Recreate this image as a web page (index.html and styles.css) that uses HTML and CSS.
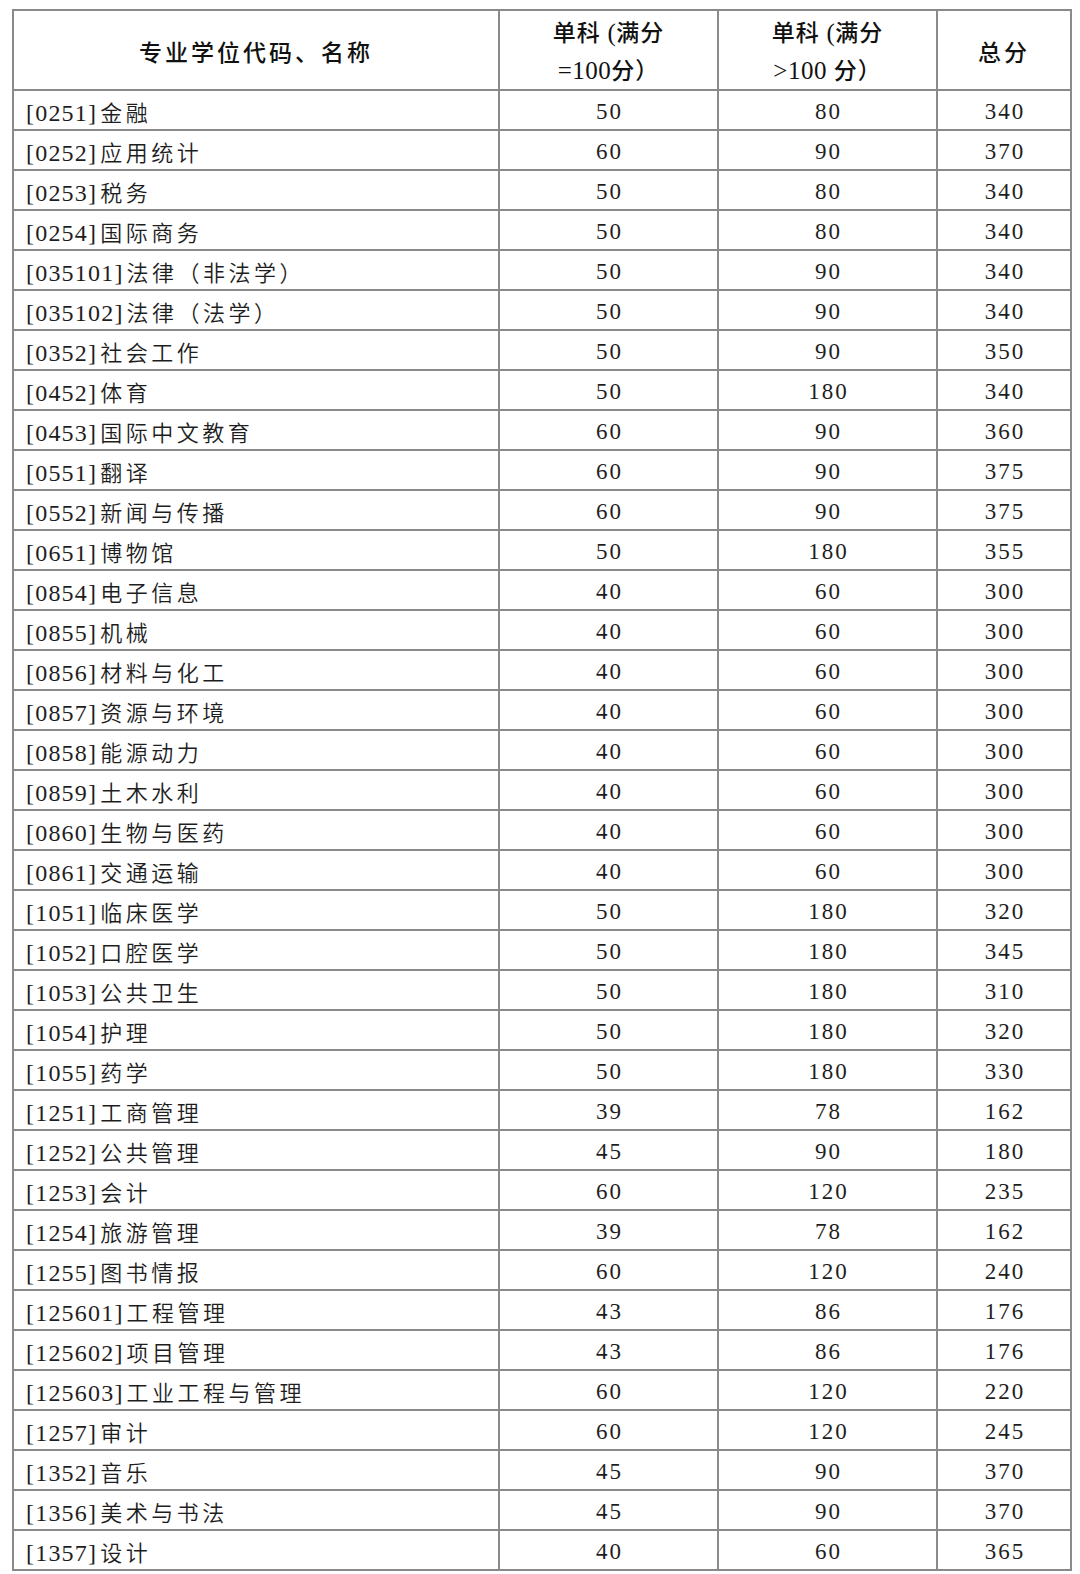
FILE: index.html
```html
<!DOCTYPE html>
<html lang="zh-CN">
<head>
<meta charset="utf-8">
<title>专业学位复试分数线</title>
<link rel="stylesheet" href="styles.css">
</head>
<body>
<table class="score-table">
  <colgroup>
    <col class="c-name">
    <col class="c-single">
    <col class="c-single">
    <col class="c-total">
  </colgroup>
  <thead>
    <tr class="head-row">
      <th>专业学位代码、名称</th>
      <th><span class="h-line">单科<span class="lat"> (</span>满分</span><span class="h-line"><span class="lat">=100</span>分）</span></th>
      <th><span class="h-line">单科<span class="lat"> (</span>满分</span><span class="h-line"><span class="lat">&gt;100 </span>分）</span></th>
      <th>总分</th>
    </tr>
  </thead>
  <tbody>
    <tr><td class="name"><span class="code">[0251]</span><span class="cn">金融</span></td><td class="num">50</td><td class="num">80</td><td class="num">340</td></tr>
    <tr><td class="name"><span class="code">[0252]</span><span class="cn">应用统计</span></td><td class="num">60</td><td class="num">90</td><td class="num">370</td></tr>
    <tr><td class="name"><span class="code">[0253]</span><span class="cn">税务</span></td><td class="num">50</td><td class="num">80</td><td class="num">340</td></tr>
    <tr><td class="name"><span class="code">[0254]</span><span class="cn">国际商务</span></td><td class="num">50</td><td class="num">80</td><td class="num">340</td></tr>
    <tr><td class="name"><span class="code">[035101]</span><span class="cn">法律（非法学）</span></td><td class="num">50</td><td class="num">90</td><td class="num">340</td></tr>
    <tr><td class="name"><span class="code">[035102]</span><span class="cn">法律（法学）</span></td><td class="num">50</td><td class="num">90</td><td class="num">340</td></tr>
    <tr><td class="name"><span class="code">[0352]</span><span class="cn">社会工作</span></td><td class="num">50</td><td class="num">90</td><td class="num">350</td></tr>
    <tr><td class="name"><span class="code">[0452]</span><span class="cn">体育</span></td><td class="num">50</td><td class="num">180</td><td class="num">340</td></tr>
    <tr><td class="name"><span class="code">[0453]</span><span class="cn">国际中文教育</span></td><td class="num">60</td><td class="num">90</td><td class="num">360</td></tr>
    <tr><td class="name"><span class="code">[0551]</span><span class="cn">翻译</span></td><td class="num">60</td><td class="num">90</td><td class="num">375</td></tr>
    <tr><td class="name"><span class="code">[0552]</span><span class="cn">新闻与传播</span></td><td class="num">60</td><td class="num">90</td><td class="num">375</td></tr>
    <tr><td class="name"><span class="code">[0651]</span><span class="cn">博物馆</span></td><td class="num">50</td><td class="num">180</td><td class="num">355</td></tr>
    <tr><td class="name"><span class="code">[0854]</span><span class="cn">电子信息</span></td><td class="num">40</td><td class="num">60</td><td class="num">300</td></tr>
    <tr><td class="name"><span class="code">[0855]</span><span class="cn">机械</span></td><td class="num">40</td><td class="num">60</td><td class="num">300</td></tr>
    <tr><td class="name"><span class="code">[0856]</span><span class="cn">材料与化工</span></td><td class="num">40</td><td class="num">60</td><td class="num">300</td></tr>
    <tr><td class="name"><span class="code">[0857]</span><span class="cn">资源与环境</span></td><td class="num">40</td><td class="num">60</td><td class="num">300</td></tr>
    <tr><td class="name"><span class="code">[0858]</span><span class="cn">能源动力</span></td><td class="num">40</td><td class="num">60</td><td class="num">300</td></tr>
    <tr><td class="name"><span class="code">[0859]</span><span class="cn">土木水利</span></td><td class="num">40</td><td class="num">60</td><td class="num">300</td></tr>
    <tr><td class="name"><span class="code">[0860]</span><span class="cn">生物与医药</span></td><td class="num">40</td><td class="num">60</td><td class="num">300</td></tr>
    <tr><td class="name"><span class="code">[0861]</span><span class="cn">交通运输</span></td><td class="num">40</td><td class="num">60</td><td class="num">300</td></tr>
    <tr><td class="name"><span class="code">[1051]</span><span class="cn">临床医学</span></td><td class="num">50</td><td class="num">180</td><td class="num">320</td></tr>
    <tr><td class="name"><span class="code">[1052]</span><span class="cn">口腔医学</span></td><td class="num">50</td><td class="num">180</td><td class="num">345</td></tr>
    <tr><td class="name"><span class="code">[1053]</span><span class="cn">公共卫生</span></td><td class="num">50</td><td class="num">180</td><td class="num">310</td></tr>
    <tr><td class="name"><span class="code">[1054]</span><span class="cn">护理</span></td><td class="num">50</td><td class="num">180</td><td class="num">320</td></tr>
    <tr><td class="name"><span class="code">[1055]</span><span class="cn">药学</span></td><td class="num">50</td><td class="num">180</td><td class="num">330</td></tr>
    <tr><td class="name"><span class="code">[1251]</span><span class="cn">工商管理</span></td><td class="num">39</td><td class="num">78</td><td class="num">162</td></tr>
    <tr><td class="name"><span class="code">[1252]</span><span class="cn">公共管理</span></td><td class="num">45</td><td class="num">90</td><td class="num">180</td></tr>
    <tr><td class="name"><span class="code">[1253]</span><span class="cn">会计</span></td><td class="num">60</td><td class="num">120</td><td class="num">235</td></tr>
    <tr><td class="name"><span class="code">[1254]</span><span class="cn">旅游管理</span></td><td class="num">39</td><td class="num">78</td><td class="num">162</td></tr>
    <tr><td class="name"><span class="code">[1255]</span><span class="cn">图书情报</span></td><td class="num">60</td><td class="num">120</td><td class="num">240</td></tr>
    <tr><td class="name"><span class="code">[125601]</span><span class="cn">工程管理</span></td><td class="num">43</td><td class="num">86</td><td class="num">176</td></tr>
    <tr><td class="name"><span class="code">[125602]</span><span class="cn">项目管理</span></td><td class="num">43</td><td class="num">86</td><td class="num">176</td></tr>
    <tr><td class="name"><span class="code">[125603]</span><span class="cn">工业工程与管理</span></td><td class="num">60</td><td class="num">120</td><td class="num">220</td></tr>
    <tr><td class="name"><span class="code">[1257]</span><span class="cn">审计</span></td><td class="num">60</td><td class="num">120</td><td class="num">245</td></tr>
    <tr><td class="name"><span class="code">[1352]</span><span class="cn">音乐</span></td><td class="num">45</td><td class="num">90</td><td class="num">370</td></tr>
    <tr><td class="name"><span class="code">[1356]</span><span class="cn">美术与书法</span></td><td class="num">45</td><td class="num">90</td><td class="num">370</td></tr>
    <tr><td class="name"><span class="code">[1357]</span><span class="cn">设计</span></td><td class="num">40</td><td class="num">60</td><td class="num">365</td></tr>
  </tbody>
</table>
</body>
</html>
```

FILE: styles.css
```css
html, body {
  margin: 0;
  padding: 0;
  background: #ffffff;
}

body {
  padding: 9px 0 0 12px;
  color: #1e1e1e;
  font-family: "Liberation Serif", "Noto Sans CJK SC", serif;
}

.score-table {
  border-collapse: collapse;
  table-layout: fixed;
  width: 1058px;
}

.c-name { width: 486px; }
.c-single { width: 219px; }
.c-total { width: 134px; }

.score-table th,
.score-table td {
  border: 2px solid #8a8a8a;
  padding: 0;
  vertical-align: middle;
}

.score-table .head-row {
  height: 79px;
}

.score-table .head-row th {
  font-family: "Noto Sans CJK SC", sans-serif;
  font-weight: 500;
  font-size: 23px;
  letter-spacing: 3px;
  text-align: center;
  line-height: 36px;
  color: #111;
  padding-top: 2px;
}

.h-line {
  display: block;
  letter-spacing: 1px;
}

.lat {
  font-family: "Liberation Serif", serif;
  font-weight: 400;
  font-size: 25px;
  letter-spacing: 0.5px;
}

.score-table tbody tr {
  height: 40px;
}

.score-table .name {
  padding-left: 12px;
  padding-top: 2px;
  white-space: nowrap;
  text-align: left;
}

.code {
  font-family: "Liberation Serif", serif;
  font-size: 24px;
  letter-spacing: 1.2px;
}

.cn {
  font-family: "Noto Sans CJK SC", sans-serif;
  font-weight: 350;
  font-size: 22px;
  letter-spacing: 3.5px;
  margin-left: 3px;
}

.score-table .num {
  text-align: center;
  font-family: "Liberation Serif", serif;
  font-size: 23px;
  letter-spacing: 2px;
  text-indent: 2px;
  padding-top: 3px;
}
```
